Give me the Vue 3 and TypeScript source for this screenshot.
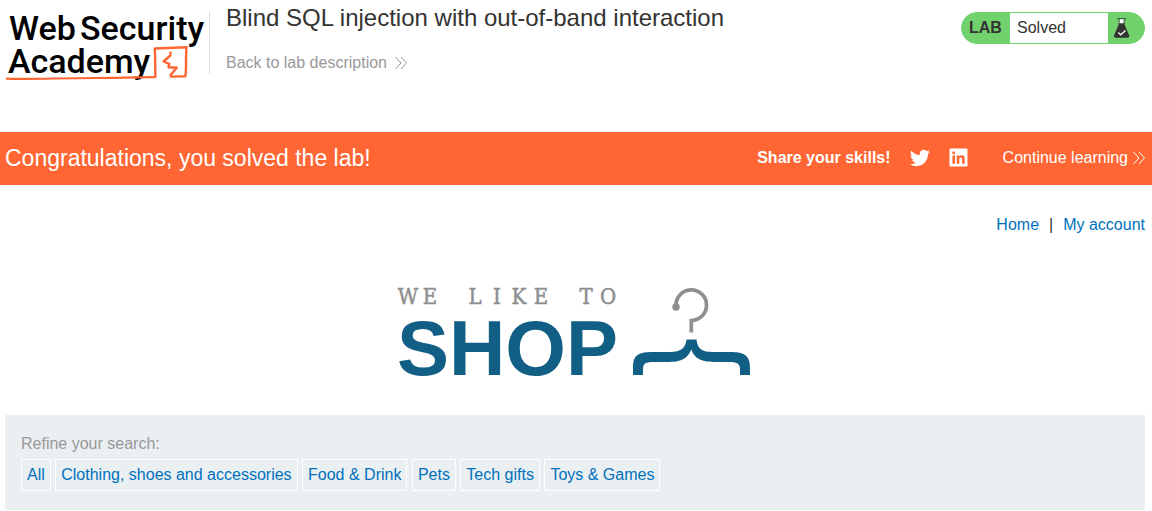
<script setup lang="ts">
const categories: string[] = [
  'All',
  'Clothing, shoes and accessories',
  'Food & Drink',
  'Pets',
  'Tech gifts',
  'Toys & Games',
]
</script>

<template>
  <div class="page">
    <header class="header">
      <a class="logo" href="#" aria-label="Web Security Academy">
        <svg width="205" height="84" viewBox="0 0 205 84">
          <g class="logo-text">
            <text x="9" y="40">Web</text>
            <text x="80" y="40">Security</text>
            <text x="8" y="73">Academy</text>
          </g>
          <g fill="none" stroke="#ff6633" stroke-linejoin="round">
            <path d="M6 78.600 C30 79.600 60 78 95 78 S140 77 155.500 77.200" stroke-width="2.200" />
            <path d="M155.500 77.500 C155 66 155.500 57 154.700 48.500 L186.500 47.300 C185.500 57 186.600 66 185.500 76.200 L170 76.600" stroke-width="2.400" />
            <path d="M170.500 51.500 L170.300 55.500 L163.500 61.500 L169.300 63.800 L168.500 67.300 L176.800 67.800 L170 75.800" stroke-width="2.400" />
          </g>
        </svg>
      </a>
      <div class="headline">
        <h1>Blind SQL injection with out-of-band interaction</h1>
        <a class="back" href="#">Back to lab description
          <svg width="14" height="14" viewBox="0 0 14 14" fill="none" stroke="currentColor"><path d="M1.500 1 L7 7 L1.500 13 M7 1 L12.500 7 L7 13" /></svg>
        </a>
      </div>
      <div class="status">
        <strong>LAB</strong>
        <span class="state">Solved</span>
        <svg width="37" height="30" viewBox="0 0 37 30">
          <path d="M9.500 5.500h9M11.500 6v5M16.500 6v5" stroke="#333332" stroke-width="1" />
          <path d="M12 6h4v5h-4z" fill="#fff" />
          <path d="M11.500 10h5l5.200 12.500q.6 2.500-1.700 2.500H8q-2.300 0-1.700-2.500z" fill="#333332" />
          <path d="M10.500 19.500l2.500 2.500 5-4.500" fill="none" stroke="#fff" stroke-width="1.300" />
        </svg>
      </div>
    </header>

    <section class="banner">
      <h2>Congratulations, you solved the lab!</h2>
      <div class="share">
        <strong>Share your skills!</strong>
        <a href="#" aria-label="Twitter">
          <svg width="20" height="20" viewBox="0 0 24 24" fill="#fff"><path d="M23.950 4.570a10 10 0 0 1-2.820.77 4.960 4.960 0 0 0 2.160-2.720c-.95.55-2 .96-3.130 1.180a4.920 4.920 0 0 0-8.380 4.480C7.690 8.100 4.070 6.130 1.640 3.160a4.920 4.920 0 0 0 1.520 6.570 4.900 4.900 0 0 1-2.230-.61v.06a4.920 4.920 0 0 0 3.950 4.830 5 5 0 0 1-2.210.080 4.940 4.940 0 0 0 4.600 3.420A9.870 9.870 0 0 1 0 19.540a14 14 0 0 0 7.550 2.210c9.050 0 14-7.500 14-13.980 0-.21 0-.42-.015-.63a9.900 9.900 0 0 0 2.460-2.550z" /></svg>
        </a>
        <a href="#" aria-label="LinkedIn">
          <svg width="19" height="19" viewBox="0 0 19 19">
            <rect x=".5" y=".5" width="18" height="18" rx="1" fill="#fff" />
            <g fill="#ff6633">
              <circle cx="4.700" cy="4.800" r="1.500" />
              <path d="M3.400 7.500h2.600v8.200H3.400zM7.700 7.500h2.500v1.100c.5-.8 1.300-1.300 2.500-1.300 2.500 0 3 1.600 3 3.800v4.600h-2.600v-4.100c0-1.100-.1-2.200-1.400-2.200s-1.400 1-1.400 2.200v4.100H7.700z" />
            </g>
          </svg>
        </a>
      </div>
      <a class="continue" href="#">Continue learning
        <svg width="14" height="14" viewBox="0 0 14 14" fill="none" stroke="currentColor"><path d="M1.500 1 L7 7 L1.500 13 M7 1 L12.500 7 L7 13" /></svg>
      </a>
    </section>

    <nav class="links">
      <a href="#">Home</a>
      <span>|</span>
      <a href="#">My account</a>
    </nav>

    <div class="shop">
      <svg width="352" height="92" viewBox="0 0 352 92" role="img" aria-label="We like to shop">
        <text class="tagline" y="18" x="9 31 53 76 98 120 142 164 187 209">WE LIKE TO</text>
        <text class="brand" x="-2" y="89">SHOP</text>
        <path d="M277 20.500 A15.300 15.300 0 1 1 292.300 34.500 V46.500" fill="none" stroke="#8f8f8f" stroke-width="3.700" />
        <circle cx="277" cy="21" r="3.700" fill="#8f8f8f" />
        <path d="M287.500 53.500H297.500C298.500 63 303 66 314 66H331C345 66 351 69 351 82V89H341V83C341 77 337 76 330 76H318C302 76 296 73 292.300 63.500C288 73 283 76 267 76H255C247 76 244 77 244 83V89H234V82C234 69 239 66 254 66H271C282 66 286.500 62 287.500 53.500Z" fill="#115f84" />
      </svg>
    </div>

    <section class="filters">
      <p>Refine your search:</p>
      <div class="tags">
        <template v-for="category in categories" :key="category"><a href="#">{{ category }}</a>{{ ' ' }}</template>
      </div>
    </section>
  </div>
</template>

<style>
body {
  margin: 0;
  background: #fff;
}
</style>

<style scoped>
.page {
  font: 16px/20px "Liberation Sans", Arial, sans-serif;
  color: #333332;
}
a {
  color: #0071bc;
  text-decoration: none;
}
h1, h2, p {
  margin: 0;
  font-weight: 400;
}
svg {
  display: block;
}
.header {
  display: flex;
  align-items: flex-start;
  min-height: 120px;
  padding: 12px 7px 0 0;
}
.logo {
  height: 62px;
  padding-right: 4px;
  border-right: 1px solid #dcdcdc;
}
.logo svg {
  margin-top: -12px;
}
.logo-text {
  font: 500 34px Roboto, "Liberation Sans", sans-serif;
  fill: #000;
}
.headline {
  flex: 1;
  padding-left: 16px;
}
h1 {
  font-size: 24px;
  line-height: 28px;
  margin-top: -8px;
}
.back {
  display: inline-flex;
  align-items: center;
  gap: 7px;
  margin-top: 21px;
  color: #999;
}
.status {
  display: flex;
  align-items: center;
  box-sizing: border-box;
  height: 32px;
  border: 1px solid #70d16d;
  border-radius: 16px;
  background: #70d16d;
}
.status strong {
  box-sizing: border-box;
  width: 48px;
  padding-left: 7px;
}
.status svg {
  width: 36px;
  height: 30px;
}
.state {
  box-sizing: border-box;
  width: 98px;
  padding-left: 7px;
  line-height: 30px;
  background: #fff;
}
.banner {
  display: flex;
  align-items: center;
  box-sizing: border-box;
  min-height: 53px;
  padding: 0 6px 2px 5px;
  color: #fff;
  background: #ff6633;
}
.banner h2 {
  flex: 1;
  font-size: 23px;
  line-height: 28px;
}
.share {
  display: flex;
  align-items: center;
  gap: 19px;
  margin-right: 35px;
}
.continue {
  display: flex;
  align-items: center;
  gap: 4px;
  color: #fff;
}
.links {
  display: flex;
  justify-content: flex-end;
  gap: 10px;
  padding: 30px 7px 0;
}
.shop {
  display: flex;
  justify-content: center;
  padding: 51px 2px 37px 0;
}
.shop svg {
  overflow: visible;
}
.tagline {
  font: 22px "DejaVu Serif Condensed", "Liberation Serif", serif;
  fill: #8f8f8f;
  stroke: #8f8f8f;
  stroke-width: 0.5px;
  text-anchor: middle;
}
.brand {
  font: 700 78px "Liberation Sans", Arial, sans-serif;
  fill: #115f84;
}
.filters {
  margin: 0 7px 0 5px;
  padding: 19px 16px;
  background: #eaeff2;
}
.filters p {
  color: #999;
  margin-bottom: 5px;
}
.tags a {
  display: inline-block;
  padding: 5px;
  border: 1px solid #fff;
}
</style>
